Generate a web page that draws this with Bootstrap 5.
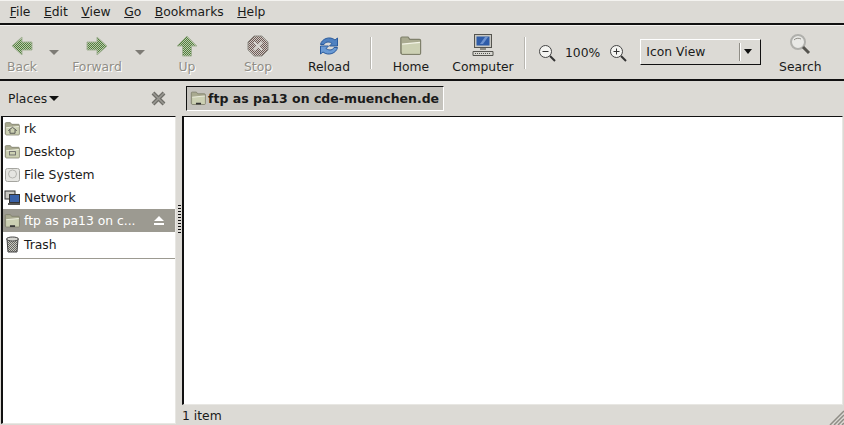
<!DOCTYPE html>
<html lang="en">
<head>
    <meta charset="UTF-8">
    <title>ftp as pa13 on cde-muenchen.de</title>
    <link href="https://cdn.jsdelivr.net/npm/bootstrap@5.3.0/dist/css/bootstrap.min.css" rel="stylesheet">
    <style>
        html, body { height: 100%; overflow: hidden; }
        body { background: #dcdad5; color: #1a1a1a; font-family: "DejaVu Sans", sans-serif; font-size: 12.35px; line-height: 16px; }
        .app-win { width: 844px; height: 425px; }
        .menu-strip { height: 25px; padding-left: 3px; border-bottom: 2px solid #111; border-top: 1px solid #f4f3f0; }
        .menu-item { padding: 0 6.75px; }
        .tool-strip { height: 56px; border-bottom: 2px solid #111; border-top: 1px solid #f4f3f0; }
        .tool-btn { flex: none; display: flex; flex-direction: column; align-items: center; justify-content: flex-end; height: 100%; padding-bottom: 4px; }
        .tool-btn svg { display: block; margin-bottom: 2px; }
        .tool-off { color: #8f8d86; text-shadow: 1px 1px 0 #fff; }
        .w-back { width: 44px; }
        .w-forward { width: 66px; }
        .w-up { width: 74px; }
        .w-stop { width: 68px; }
        .w-reload { width: 74px; }
        .w-home { width: 70px; }
        .w-computer { width: 74px; }
        .w-search { width: 64px; margin-left: 7px; }
        .drop-slot { width: 20px; flex: none; display: flex; justify-content: center; padding-top: 24px; }
        .drop-tri { width: 0; height: 0; border-left: 5px solid transparent; border-right: 5px solid transparent; border-top: 5px solid #7d7b75; }
        .tool-sep { width: 2px; height: 32px; flex: none; margin: 0 4px 0 4px; background: #b8b6b0; border-right: 1px solid #fff; }
        .zoom-box { flex: none; display: flex; align-items: center; gap: 9px; margin-left: 8px; }
        .view-combo { width: 121px; height: 26px; margin: 0 0 2px 13px; flex: none; display: flex; align-items: center; border: 1px solid; border-color: #fff #111 #111 #fff; padding-left: 5px; }
        .combo-sep { width: 2px; height: 18px; background: #8f8d86; border-right: 1px solid #fff; margin-left: auto; }
        .combo-tri { width: 0; height: 0; margin: 0 8px 0 3px; border-left: 4px solid transparent; border-right: 4px solid transparent; border-top: 5px solid #111; }
        .body-row { height: 344px; }
        .side-pane { width: 176px; flex: none; }
        .side-head { height: 35px; padding: 0 8px; }
        .hide-x { margin-right: 2px; }
        .tri-small { display: inline-block; width: 0; height: 0; margin-left: 2px; border-left: 5px solid transparent; border-right: 5px solid transparent; border-top: 5px solid #111; vertical-align: 2px; }
        .places-box { height: 308px; margin-left: 1px; background: #fff; border-left: 2px solid #111; border-top: 1px solid #111; border-right: 1px solid #e8e7e3; border-bottom: 1px solid #e8e7e3; }
        .place-row { height: 23px; padding-left: 1px; gap: 3px; }
        .place-row svg { flex: none; }
        .place-last { height: 24px; padding-top: 1px; }
        .place-sel { background: #9c9a91; color: #fff; }
        .place-eject { margin-left: auto; margin-right: 11px; }
        .places-rule { height: 1px; background: #9c9a91; margin: 2px 0 0 0; }
        .pane-grip { width: 6px; flex: none; }
        .grip-dots { width: 3px; height: 30px; margin: 124px 0 0 2px; background: repeating-linear-gradient(#111 0 1px, transparent 1px 3px); }
        .main-pane { flex: 1; min-width: 0; }
        .tab-strip { height: 35px; padding: 5px 0 0 4px; }
        .tab-chip { width: 258px; height: 25px; background: #c5c3bd; border: 1px solid; border-color: #111 #fff #fff #111; font-weight: 700; font-size: 12.5px; padding-left: 3px; gap: 1px; white-space: nowrap; }
        .view-area { height: 290px; width: 661px; background: #fff; border-left: 2px solid #111; border-top: 1px solid #111; border-right: 1px solid #e8e7e3; border-bottom: 1px solid #e8e7e3; }
        .status-strip { height: 20px; padding-top: 2px; position: relative; }
        .size-grip { position: absolute; right: 0; bottom: 0; }
    </style>
</head>
<body>
    <svg width="0" height="0" class="position-absolute">
        <defs>
            <pattern id="ditherGreen" width="2" height="2" patternUnits="userSpaceOnUse">
                <rect width="2" height="2" fill="#bcc8ae"/>
                <rect width="1" height="1" fill="#4f7f3a"/>
                <rect x="1" y="1" width="1" height="1" fill="#4f7f3a"/>
            </pattern>
            <pattern id="ditherRed" width="2" height="2" patternUnits="userSpaceOnUse">
                <rect width="2" height="2" fill="#d0cac5"/>
                <rect width="1" height="1" fill="#6e5a55"/>
                <rect x="1" y="1" width="1" height="1" fill="#6e5a55"/>
            </pattern>
            <pattern id="ditherGrey" width="2" height="2" patternUnits="userSpaceOnUse">
                <rect width="2" height="2" fill="#c8c8c3"/>
                <rect width="1" height="1" fill="#66665f"/>
                <rect x="1" y="1" width="1" height="1" fill="#66665f"/>
            </pattern>
            <symbol id="folderIco" viewBox="0 0 20 18">
                <path d="M1.500 15V2.500q0-1 1-1h5l1.500 2h8q1 0 1 1V15q0 1-1 1h-14q-1 0-1-1z" fill="#a9aa90" stroke="#7f806b"/>
                <path d="M2.500 7.500l15-1.500v9.500h-15z" fill="#ccd0b3"/>
                <path d="M2.500 7.500l15-1.500" stroke="#f3f4e6"/>
            </symbol>
        </defs>
    </svg>

    <div class="app-win d-flex flex-column">
        <div class="menu-strip d-flex align-items-center">
            <span class="menu-item"><u>F</u>ile</span>
            <span class="menu-item"><u>E</u>dit</span>
            <span class="menu-item"><u>V</u>iew</span>
            <span class="menu-item"><u>G</u>o</span>
            <span class="menu-item"><u>B</u>ookmarks</span>
            <span class="menu-item"><u>H</u>elp</span>
        </div>

        <div class="tool-strip d-flex align-items-center">
            <div class="tool-btn w-back tool-off">
                <svg width="22" height="22" viewBox="0 0 22 22"><path d="M1 11 11 2v5h10v8H11v5z" fill="url(#ditherGreen)" stroke="#a5b398"/></svg>
                <span>Back</span>
            </div>
            <div class="drop-slot align-self-start"><span class="drop-tri"></span></div>
            <div class="tool-btn w-forward tool-off">
                <svg width="22" height="22" viewBox="0 0 22 22"><path d="M21 11 11 2v5H1v8h10v5z" fill="url(#ditherGreen)" stroke="#a5b398"/></svg>
                <span>Forward</span>
            </div>
            <div class="drop-slot align-self-start"><span class="drop-tri"></span></div>
            <div class="tool-btn w-up tool-off">
                <svg width="22" height="22" viewBox="0 0 22 22"><path d="M11 1 1 11h5.500v10h9V11H21z" fill="url(#ditherGreen)" stroke="#a5b398"/></svg>
                <span>Up</span>
            </div>
            <div class="tool-btn w-stop tool-off">
                <svg width="22" height="22" viewBox="0 0 22 22"><path d="M7 1h8l6 6v8l-6 6H7l-6-6V7z" fill="url(#ditherRed)" stroke="#8f8d86"/><path d="m7 7 8 8m0-8-8 8" stroke="#d8d6d1" stroke-width="2"/></svg>
                <span>Stop</span>
            </div>
            <div class="tool-btn w-reload">
                <svg width="22" height="22" viewBox="0 0 22 22"><path d="M2.500 9.500C3.500 4 11.500 .5 17 5l2.500-2v8h-8l2.500-2.500C10.500 6 7 7 6 9.500z" fill="#4f81c0" stroke="#2a5a9c"/><path d="M19.500 12.500C18.500 18 10.500 21.500 5 17l-2.500 2v-8h8L8 13.500c3.500 2.500 7 1.500 8-1z" fill="#6a9ad4" stroke="#2a5a9c"/></svg>
                <span>Reload</span>
            </div>
            <div class="tool-sep"></div>
            <div class="tool-btn w-home">
                <svg width="24" height="22" viewBox="0 0 20 18"><use href="#folderIco"/></svg>
                <span>Home</span>
            </div>
            <div class="tool-btn w-computer">
                <svg width="24" height="23" viewBox="0 0 24 23"><rect x="3.500" y=".5" width="17" height="13" fill="#c9c8c2" stroke="#55544f"/><rect x="5.500" y="2.500" width="13" height="9" fill="#2f5ca8"/><path d="m9 10 5-7h3l-5 7z" fill="#6f93cf"/><path d="M9 14h6v2H9z" fill="#8f8d86"/><path d="M2 17.500h20v4H2z" fill="#d8d7d1" stroke="#55544f"/><path d="M4 19.500h16" stroke="#55544f" stroke-dasharray="1 1"/></svg>
                <span>Computer</span>
            </div>
            <div class="tool-sep"></div>
            <div class="zoom-box">
                <svg width="18" height="18" viewBox="0 0 18 18"><circle cx="7.500" cy="7.500" r="6" fill="#f4f4f1" stroke="#444"/><path d="M4.500 7.500h6" stroke="#333"/><path d="m12 12 5 5" stroke="#333" stroke-width="2"/></svg>
                <span>100%</span>
                <svg width="18" height="18" viewBox="0 0 18 18"><circle cx="7.500" cy="7.500" r="6" fill="#f4f4f1" stroke="#444"/><path d="M4.500 7.500h6M7.500 4.500v6" stroke="#333"/><path d="m12 12 5 5" stroke="#333" stroke-width="2"/></svg>
            </div>
            <div class="view-combo">
                <span>Icon View</span>
                <span class="combo-sep"></span>
                <span class="combo-tri"></span>
            </div>
            <div class="tool-btn w-search">
                <svg width="24" height="24" viewBox="0 0 24 24"><circle cx="10" cy="9" r="7" fill="#e9e9e6" stroke="#b0b0ac" stroke-width="2"/><path d="M6 7a5 4 0 0 1 7-1" fill="none" stroke="#8f8d86"/><path d="m15 14 6 6" stroke="#55544f" stroke-width="3"/></svg>
                <span>Search</span>
            </div>
        </div>

        <div class="body-row d-flex">
            <div class="side-pane d-flex flex-column">
                <div class="side-head d-flex align-items-center justify-content-between">
                    <span>Places<span class="tri-small"></span></span>
                    <svg class="hide-x" width="15" height="15" viewBox="0 0 15 15"><path d="m2 2 11 11m0-11L2 13" stroke="#6f6e68" stroke-width="4"/><path d="m2 2 11 11m0-11L2 13" stroke="#9a9993" stroke-width="1.500"/></svg>
                </div>
                <div class="places-box">
                    <div class="place-row d-flex align-items-center">
                        <svg width="17" height="16" viewBox="0 0 20 18"><use href="#folderIco"/><path d="m5 11 5-4 5 4M7 10v4h6v-4" fill="none" stroke="#444"/></svg>
                        <span>rk</span>
                    </div>
                    <div class="place-row d-flex align-items-center">
                        <svg width="17" height="16" viewBox="0 0 20 18"><use href="#folderIco"/><rect x="6.500" y="8.500" width="7" height="4" fill="none" stroke="#666"/></svg>
                        <span>Desktop</span>
                    </div>
                    <div class="place-row d-flex align-items-center">
                        <svg width="17" height="16" viewBox="0 0 17 16"><rect x="1.500" y="1.500" width="14" height="13" rx="2" fill="#e5e5e1" stroke="#a5a5a0"/><circle cx="8.500" cy="7" r="4" fill="none" stroke="#b5b5b0"/></svg>
                        <span>File System</span>
                    </div>
                    <div class="place-row d-flex align-items-center">
                        <svg width="17" height="16" viewBox="0 0 17 16"><rect x="1" y="1" width="10" height="8" fill="#c9c8c2" stroke="#333"/><rect x="5.500" y="4.500" width="10" height="8" fill="#3a62a8" stroke="#333"/><path d="M4 14h12" stroke="#555" stroke-width="2"/></svg>
                        <span>Network</span>
                    </div>
                    <div class="place-row place-sel d-flex align-items-center">
                        <svg width="17" height="16" viewBox="0 0 20 18"><use href="#folderIco"/><path d="M7 15h6" stroke="#333" stroke-width="2"/></svg>
                        <span>ftp as pa13 on c...</span>
                        <svg class="place-eject" width="10" height="9" viewBox="0 0 10 9"><path d="M5 0 10 5H0zM0 7h10v2H0z" fill="#fff"/></svg>
                    </div>
                    <div class="place-row place-last d-flex align-items-center">
                        <svg width="17" height="17" viewBox="0 0 17 17"><path d="M3 3h11l-1 13H4z" fill="url(#ditherGrey)" stroke="#444"/><ellipse cx="8.500" cy="3" rx="6" ry="2" fill="#d5d5d0" stroke="#444"/></svg>
                        <span>Trash</span>
                    </div>
                    <div class="places-rule"></div>
                </div>
            </div>
            <div class="pane-grip"><div class="grip-dots"></div></div>
            <div class="main-pane d-flex flex-column">
                <div class="tab-strip">
                    <div class="tab-chip d-flex align-items-center">
                        <svg width="17" height="17" viewBox="0 0 20 18"><use href="#folderIco"/><path d="M7 15h6" stroke="#333" stroke-width="2"/></svg>
                        <span>ftp as pa13 on cde-muenchen.de</span>
                    </div>
                </div>
                <div class="view-area"></div>
                <div class="status-strip d-flex align-items-center">
                    <span>1 item</span>
                    <svg class="size-grip" width="15" height="15" viewBox="0 0 15 15"><path d="M15 1 1 15M15 5 5 15M15 9l-6 6M15 13l-2 2" stroke="#8f8d86" stroke-width="1.500"/></svg>
                </div>
            </div>
        </div>
    </div>
    <script src="https://cdn.jsdelivr.net/npm/bootstrap@5.3.0/dist/js/bootstrap.bundle.min.js"></script>
</body>
</html>
